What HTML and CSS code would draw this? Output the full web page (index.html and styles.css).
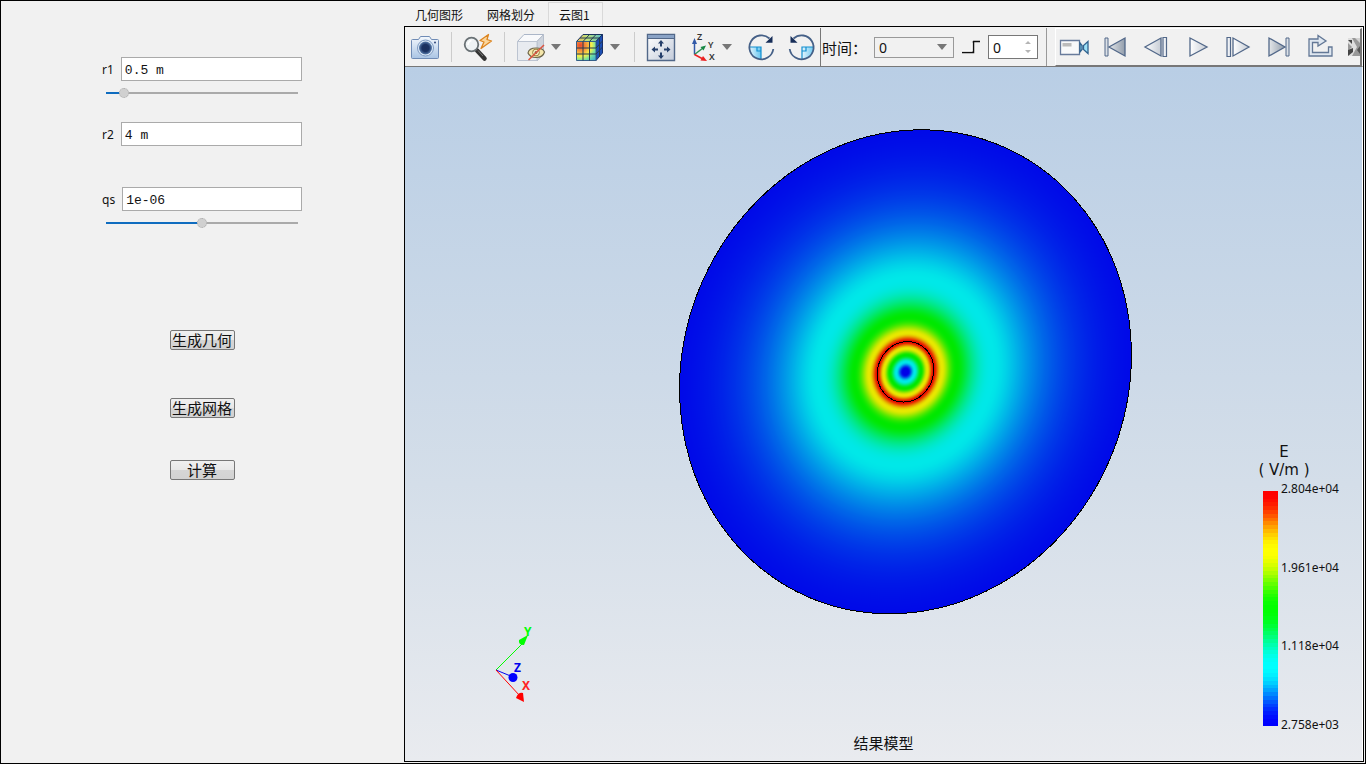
FILE: index.html
```html
<!DOCTYPE html>
<html lang="zh-CN">
<head>
<meta charset="utf-8">
<meta name="viewport" content="width=device-width, initial-scale=1">
<title>结果模型</title>
<link rel="stylesheet" href="styles.css">
</head>
<body>
<div class="app">
  <form class="params" onsubmit="return false">
    <div class="field">
      <div class="field-row">
        <label for="r1">r1</label>
        <input class="text-input" id="r1" type="text" value="0.5 m">
      </div>
      <input class="slider" type="range" aria-label="r1" min="0" max="100" value="7" style="--fill: 9%">
    </div>
    <div class="field field-r2">
      <div class="field-row">
        <label for="r2">r2</label>
        <input class="text-input" id="r2" type="text" value="4 m">
      </div>
    </div>
    <div class="field field-qs">
      <div class="field-row">
        <label for="qs">qs</label>
        <input class="text-input" id="qs" type="text" value="1e-06">
      </div>
      <input class="slider" type="range" aria-label="qs" min="0" max="100" value="50" style="--fill: 50%">
    </div>
    <div class="actions">
      <button class="action" type="button">生成几何</button>
      <button class="action action-mesh" type="button">生成网格</button>
      <button class="action action-solve" type="button">计算</button>
    </div>
  </form>

  <main class="results">
    <nav class="tabs" role="tablist">
      <button class="tab" type="button" role="tab">几何图形</button>
      <button class="tab" type="button" role="tab">网格划分</button>
      <button class="tab tab-active" type="button" role="tab" aria-selected="true">云图1</button>
    </nav>
    <section class="pane">
      <div class="toolbars">
        <div class="toolbar toolbar-view">
          <button class="tool" type="button" aria-label="截图">
            <svg viewBox="0 0 32 32" width="32" height="32">
              <defs>
                <linearGradient id="camBody" x1="0" y1="0" x2="0" y2="1"><stop offset="0" stop-color="#f4f8fd"/><stop offset="1" stop-color="#a9c4e4"/></linearGradient>
                <radialGradient id="camLens"><stop offset="0" stop-color="#1b2f5c"/><stop offset=".55" stop-color="#1b3262"/><stop offset="1" stop-color="#5b7fae"/></radialGradient>
              </defs>
              <path d="M3.500 8.500H9.500L11.500 5.500H20.500L22.500 8.500H28.500Q29.500 8.500 29.500 9.500V26.500Q29.500 27.500 28.500 27.500H3.500Q2.500 27.500 2.500 26.500V9.500Q2.500 8.500 3.500 8.500Z" fill="url(#camBody)" stroke="#6f8bb5"/>
              <circle cx="16.500" cy="17" r="8" fill="#dce8f5" stroke="#7d9ac2"/>
              <circle cx="16.500" cy="17" r="6.500" fill="url(#camLens)"/>
              <circle cx="26" cy="11.500" r="1" fill="#31487a"/>
            </svg>
          </button>
          <span class="sep"></span>
          <button class="tool" type="button" aria-label="快速缩放">
            <svg viewBox="0 0 32 32" width="32" height="32">
              <path d="M15 19.500L22.500 27.500" stroke="#333" stroke-width="4.500" stroke-linecap="round"/>
              <path d="M16 19.500L21 25" stroke="#777" stroke-width="1"/>
              <circle cx="9.500" cy="13.500" r="6.800" fill="#eef2f4" stroke="#697175" stroke-width="1.800"/>
              <path d="M6 14Q6 10.500 9.500 9.500" fill="none" stroke="#fff" stroke-width="1.500"/>
              <path d="M26.500 3.500L18 9.500L22 11L19 17.500L29.500 10L25 8.500Z" fill="#fbd69b" stroke="#dc8520" stroke-width="1.300" stroke-linejoin="round"/>
            </svg>
          </button>
          <span class="sep"></span>
          <div class="split">
            <button class="tool" type="button" aria-label="透明显示">
              <svg viewBox="0 0 32 32" width="32" height="32">
                <path d="M2.500 10.500L9 3.500H28.500L22 10.500Z" fill="#f8f9fb" stroke="#abb6c8"/>
                <path d="M22 10.500L28.500 3.500V23L22 30Z" fill="#ced4dd" stroke="#b5bdca"/>
                <path d="M2.500 10.500H22V29.500H2.500Z" fill="#e8ebf0" stroke="#bcc4d1"/>
                <path d="M13 22Q14 17 21 17Q28 17 29.500 21Q28 26.500 21 26.500Q15 26.500 13 22Z" fill="#f4e6aa" stroke="#6d6549" stroke-width="1.200"/>
                <circle cx="21" cy="21.500" r="3.400" fill="#f8edc1" stroke="#967c37"/>
                <circle cx="21" cy="21.500" r="1.300" fill="#51462d"/>
                <path d="M13.500 29L29 14" stroke="#dd5440" stroke-width="1.500"/>
              </svg>
            </button>
            <button class="drop" type="button" aria-label="透明选项"><svg viewBox="0 0 10 6" width="10" height="6"><path d="M0 0H10L5 6Z" fill="#777"/></svg></button>
          </div>
          <div class="split">
            <button class="tool" type="button" aria-label="云图样式">
              <svg viewBox="0 0 32 32" width="32" height="32">
                <defs>
                  <radialGradient id="cubeFront" cx=".2" cy=".2" r="1.150"><stop offset="0" stop-color="#e9462c"/><stop offset=".3" stop-color="#f8a23d"/><stop offset=".5" stop-color="#f2f24b"/><stop offset=".7" stop-color="#6fe0a2"/><stop offset="1" stop-color="#2b9be6"/></radialGradient>
                  <linearGradient id="cubeTop"><stop offset="0" stop-color="#e8b35b"/><stop offset=".4" stop-color="#bfe378"/><stop offset="1" stop-color="#56bbc7"/></linearGradient>
                </defs>
                <path d="M2.500 10.500L9 3.500H28.500L22 10.500Z" fill="url(#cubeTop)" stroke="#18335d"/>
                <path d="M22 10.500L28.500 3.500V22L22 29.500Z" fill="#1c4fb5" stroke="#172f69"/>
                <path d="M2.500 10.500H22V29.500H2.500Z" fill="url(#cubeFront)" stroke="#356089"/>
                <path d="M9 29.500V10.500L15.500 3.500M15.500 29.500V10.500L22 3.500M2.500 17H22L28.500 10M2.500 23H22L28.500 16M6 7H25.500V26" fill="none" stroke="#263b50"/>
              </svg>
            </button>
            <button class="drop" type="button" aria-label="云图选项"><svg viewBox="0 0 10 6" width="10" height="6"><path d="M0 0H10L5 6Z" fill="#777"/></svg></button>
          </div>
          <span class="sep"></span>
          <button class="tool" type="button" aria-label="适合窗口">
            <svg viewBox="0 0 32 32" width="32" height="32">
              <defs><linearGradient id="fitBg" x1="0" y1="0" x2="1" y2="1"><stop offset="0" stop-color="#fff"/><stop offset="1" stop-color="#c3cbda"/></linearGradient></defs>
              <path d="M2.500 3.500H29.500V29.500H2.500Z" fill="url(#fitBg)" stroke="#526889" stroke-width="1.400"/>
              <path d="M3 4H29V7H3Z" fill="#8aa3c6"/><path d="M3 7.500H29" stroke="#526889"/>
              <path d="M16 9L19 12.500H17V15.500H15V12.500H13ZM16 28L13 24.500H15V21.500H17V24.500H19ZM6.500 18.500L10 15.500V17.500H13V19.500H10V21.500ZM25.500 18.500L22 21.500V19.500H19V17.500H22V15.500Z" fill="#263f6b"/>
            </svg>
          </button>
          <div class="split">
            <button class="tool" type="button" aria-label="视图方向">
              <svg class="axis-icon" viewBox="0 0 32 32" width="32" height="32">
                <path d="M8.500 23.500V11" stroke="#3159a8" stroke-width="1.500"/><path d="M8.500 7L11 13H6Z" fill="#3159a8"/>
                <path d="M8.500 23.500L17 17" stroke="#2a9353" stroke-width="1.500"/><path d="M20 14.500L17.500 19.500L14.500 16Z" fill="#178743"/>
                <path d="M8.500 23.500L16 27.500" stroke="#ec2121" stroke-width="1.500"/><path d="M21 30L14.500 29.500L17 25Z" fill="#ec2121"/>
                <text x="11" y="9">Z</text><text x="22" y="17">Y</text><text x="23" y="29">X</text>
              </svg>
            </button>
            <button class="drop" type="button" aria-label="视图选项"><svg viewBox="0 0 10 6" width="10" height="6"><path d="M0 0H10L5 6Z" fill="#777"/></svg></button>
          </div>
          <button class="tool" type="button" aria-label="顺时针旋转">
            <svg viewBox="0 0 32 32" width="32" height="32">
              <defs><linearGradient id="turn"><stop offset="0" stop-color="#e6f6fd"/><stop offset="1" stop-color="#68c6f0"/></linearGradient></defs>
              <path d="M4 16H16V28.500Q4.500 27 4 16Z" fill="url(#turn)"/>
              <path d="M4 16H16V28M12 16V20H16" fill="none" stroke="#128fd0" stroke-width="1.200"/>
              <path d="M24.500 7.500A12 12 0 1 0 28.300 18" fill="none" stroke="#456087" stroke-width="1.800"/>
              <path d="M27.500 5V11.800H20.500Z" fill="#172e59"/>
            </svg>
          </button>
          <button class="tool" type="button" aria-label="逆时针旋转">
            <svg viewBox="0 0 32 32" width="32" height="32">
              <path d="M28 16H16V28.500Q27.500 27 28 16Z" fill="url(#turn)"/>
              <path d="M28 16H16V28M20 16V20H16" fill="none" stroke="#128fd0" stroke-width="1.200"/>
              <path d="M7.500 7.500A12 12 0 1 1 3.700 18" fill="none" stroke="#456087" stroke-width="1.800"/>
              <path d="M4.500 5V11.800H11.500Z" fill="#172e59"/>
            </svg>
          </button>
        </div>

        <div class="toolbar toolbar-time">
          <label class="time-label" for="time">时间：</label>
          <div class="combo">
            <select id="time"><option>0</option></select>
            <svg class="combo-arrow" viewBox="0 0 10 6" width="10" height="6"><path d="M0 0H10L5 6Z" fill="#777"/></svg>
          </div>
          <label class="step-label" for="step" aria-label="步">
            <svg viewBox="0 0 20 16" width="20" height="16"><path d="M1 13.500H12.500V2" fill="none" stroke="#111" stroke-width="1.500"/><path d="M12 2.500H19" stroke="#111" stroke-width="1.500"/><path d="M1 12H11V4" fill="none" stroke="#fff"/></svg>
          </label>
          <div class="spin">
            <input id="step" type="number" value="0">
            <svg class="spin-arrows" viewBox="0 0 6 14" width="6" height="14"><path d="M0 4H6L3 1ZM0 10H6L3 13Z" fill="#b4b4b4"/></svg>
          </div>
        </div>

        <div class="toolbar toolbar-play">
          <button class="tool" type="button" aria-label="录制">
            <svg viewBox="0 0 32 32" width="32" height="32">
              <defs><linearGradient id="playGrad"><stop offset="0" stop-color="#fff"/><stop offset="1" stop-color="#c6ccd5"/></linearGradient>
              <linearGradient id="endGrad"><stop offset="0" stop-color="#e4e7ea"/><stop offset="1" stop-color="#929dab"/></linearGradient></defs>
              <path d="M2.500 9.500H21.500V23.500H2.500Z" fill="#f8f9fa" stroke="#687b9b" stroke-width="1.300"/>
              <path d="M4.500 12H13.500V15.500H4.500Z" fill="#bbb"/>
              <path d="M22 12L24 14.500V18.500L22 21ZM30 10.500L25.500 14.500V18.500L30 22.500Z" fill="#9ce0f6" stroke="#32638f" stroke-width="1.300"/>
            </svg>
          </button>
          <button class="tool" type="button" aria-label="第一帧">
            <svg viewBox="0 0 32 32" width="32" height="32"><path d="M6 7H9V25H6Z" fill="#dce1e7" stroke="#526889"/><path d="M26 7V25L10 16Z" fill="url(#endGrad)" stroke="#526889" stroke-width="1.300"/></svg>
          </button>
          <button class="tool" type="button" aria-label="上一帧">
            <svg viewBox="0 0 32 32" width="32" height="32"><path d="M21 7V25L5 16Z" fill="url(#playGrad)" stroke="#526889" stroke-width="1.300"/><path d="M23 6.500H26.500V25.500H23Z" fill="#eef1f5" stroke="#526889" stroke-width="1.200"/></svg>
          </button>
          <button class="tool" type="button" aria-label="播放">
            <svg viewBox="0 0 32 32" width="32" height="32"><path d="M9 7V25L26 16Z" fill="url(#playGrad)" stroke="#526889" stroke-width="1.300"/></svg>
          </button>
          <button class="tool" type="button" aria-label="下一帧">
            <svg viewBox="0 0 32 32" width="32" height="32"><path d="M5 6.500H8.500V25.500H5Z" fill="#eef1f5" stroke="#526889" stroke-width="1.200"/><path d="M11 7V25L27 16Z" fill="url(#playGrad)" stroke="#526889" stroke-width="1.300"/></svg>
          </button>
          <button class="tool" type="button" aria-label="最后一帧">
            <svg viewBox="0 0 32 32" width="32" height="32"><path d="M6 7V25L22 16Z" fill="url(#endGrad)" stroke="#526889" stroke-width="1.300"/><path d="M23 7H26V25H23Z" fill="#dce1e7" stroke="#526889"/></svg>
          </button>
          <button class="tool" type="button" aria-label="循环播放">
            <svg viewBox="0 0 32 32" width="32" height="32"><path d="M5 25V8H14V4.500L22 10L14 15V11.500H8.500V21.500H24.500V16H28V25Z" fill="#dfe7f0" stroke="#637896" stroke-width="1.300"/></svg>
          </button>
          <button class="more" type="button" aria-label="更多">
            <svg viewBox="0 0 12 18" width="12" height="18"><path d="M0 0H12V18H0Z" fill="#999"/><path d="M0 0H4L9 9L4 18H0V13L4 9L0 5Z" fill="#dedede"/><path d="M0 2L4 6V2ZM0 12L5 10V14L0 18Z" fill="#444"/><path d="M7 0H12V5Z" fill="#d2d2d2"/><path d="M9 12L12 8V16Z" fill="#555"/></svg>
          </button>
        </div>
      </div>

      <div class="stage">
        <svg class="plot" viewBox="0 0 957 694" preserveAspectRatio="xMidYMid meet" role="img" aria-label="电场云图">
          <defs><radialGradient id="field" gradientUnits="userSpaceOnUse" cx="0" cy="0" r="1000"></radialGradient></defs>
          <g transform="matrix(.2254 0 -.016 .242 500.500 304.800)" stroke="#000" shape-rendering="crispEdges">
            <circle r="1000" fill="url(#field)" vector-effect="non-scaling-stroke"/>
            <circle r="125" fill="none" vector-effect="non-scaling-stroke"/>
          </g>
        </svg>
        <svg class="triad" viewBox="0 0 50 84" width="50" height="84">
          <path d="M7 47L34 20" stroke="#0f0"/><path d="M39 12L30 17Q29 22 35 22Z" fill="#0f0"/>
          <path d="M7 47L24 54" stroke="#00e"/><circle cx="24" cy="54.500" r="4.500" fill="#00f"/>
          <path d="M7 47L31 73" stroke="#f00"/><path d="M35 79L34 70Q29 69 27 75Z" fill="#f00"/>
          <text x="35" y="13" fill="#0f0">Y</text><text x="25" y="49" fill="#00e">Z</text><text x="33" y="67" fill="#f22">X</text>
        </svg>
        <div class="caption">结果模型</div>
        <div class="legend">
          <div class="legend-title"><span>E</span><span>( V/m )</span></div>
          <div class="legend-body">
            <div class="bar" id="bar"></div>
            <div class="ticks"><span>2.804e+04</span><span>1.961e+04</span><span>1.118e+04</span><span>2.758e+03</span></div>
          </div>
        </div>
      </div>
    </section>
  </main>
</div>
<script src="field.js"></script>
</body>
</html>
```

FILE: styles.css
```css
* {
  box-sizing: border-box;
}

body {
  margin: 0;
  background: #f1f1f1;
  color: #111;
  font-family: "Noto Sans", "Noto Sans CJK SC", sans-serif;
  font-size: 12px;
}

button,
input,
select {
  margin: 0;
  padding: 0;
  font: inherit;
  color: inherit;
}

svg {
  display: block;
}

.app {
  display: flex;
  min-height: 100vh;
  border: 1px solid #000;
}

/* Parameter panel */

.params {
  flex: none;
  width: 403px;
  padding: 56px 102px 0 101px;
}

.field-row {
  display: flex;
  align-items: center;
  gap: 7px;
}

.text-input {
  flex: 1;
  min-width: 0;
  height: 24px;
  padding: 2px 3px 0;
  border: 1px solid #aaa;
  background: #fff;
  font-family: "Liberation Mono", monospace;
  font-size: 13px;
}

.slider {
  display: block;
  width: 192px;
  height: 14px;
  margin: 5px 4px 0;
  appearance: none;
  background: linear-gradient(to right, #0f6cbf var(--fill), #aaa var(--fill)) center / 100% 2px no-repeat;
}

.slider::-webkit-slider-thumb {
  appearance: none;
  width: 10px;
  height: 10px;
  border: 1px dotted #aaa;
  border-radius: 50%;
  background: #d0d0d0;
}

.field-r2 {
  margin-top: 22px;
}

.field-qs {
  margin-top: 41px;
}

.actions {
  display: flex;
  flex-direction: column;
  align-items: center;
  margin-top: 100px;
}

.action {
  width: 65px;
  height: 20px;
  border: 1px solid #777;
  border-radius: 2px;
  background: linear-gradient(#f0f0f0, #e8e8e8 48%, #d6d6d6 50%, #d2d2d2);
  font-family: "Noto Sans CJK SC", sans-serif;
  font-size: 15px;
  line-height: 18px;
  white-space: nowrap;
}

.action-mesh {
  margin-top: 48px;
}

.action-solve {
  margin-top: 42px;
}

/* Result area */

.results {
  display: flex;
  flex: 1;
  flex-direction: column;
  min-width: 0;
  padding: 0 1px 1px 0;
}

.tabs {
  display: flex;
  height: 25px;
  padding-top: 1px;
}

.tab {
  padding: 0 12px 0 10px;
  border: 1px solid transparent;
  border-bottom: 0;
  background: none;
  font-family: "Noto Sans CJK SC", sans-serif;
  line-height: 22px;
}

.tab-active {
  border-color: #d9d9d9;
  background: #f3f3f3;
}

.pane {
  display: flex;
  flex: 1;
  flex-direction: column;
  border: 1px solid #000;
}

.toolbars {
  display: flex;
  height: 40px;
  padding: 1px 0 0;
  border-bottom: 1px solid #777;
  border-right: 1px solid #fff;
}

.toolbar {
  display: flex;
  align-items: center;
}

.toolbar-view {
  gap: 9px;
  padding: 0 2px 0 4px;
  border-right: 1px solid #777;
}

.tool,
.drop,
.more {
  display: flex;
  align-items: center;
  justify-content: center;
  flex: none;
  border: 0;
  background: none;
}

.tool {
  width: 32px;
  height: 32px;
}

.drop {
  width: 18px;
  height: 32px;
}

.split {
  display: flex;
}

.sep {
  width: 1px;
  height: 30px;
  margin: 0 1px;
  background: #ccc;
}

.axis-icon {
  font-size: 9px;
  font-weight: 600;
  fill: #333;
}

.toolbar-time {
  width: 226px;
  padding-right: 8px;
  border-right: 1px solid #999;
  font-size: 14px;
}

.time-label {
  flex: 1;
  padding-left: 1px;
  font-family: "Noto Sans CJK SC", sans-serif;
  font-size: 15px;
  white-space: nowrap;
}

.combo,
.spin {
  display: grid;
  align-items: center;
}

.combo > *,
.spin > * {
  grid-area: 1 / 1;
}

.combo select {
  width: 80px;
  height: 21px;
  padding-left: 4px;
  appearance: none;
  border: 1px solid #999;
  border-radius: 0;
  background: #f1f1f1;
}

.combo-arrow {
  justify-self: end;
  margin-right: 7px;
  pointer-events: none;
}

.step-label {
  margin: 0 7px;
}

.spin input {
  width: 50px;
  height: 24px;
  padding-left: 4px;
  appearance: textfield;
  border: 1px solid #777;
  background: #fff;
}

.spin input::-webkit-inner-spin-button {
  appearance: none;
}

.spin-arrows {
  justify-self: end;
  margin-right: 7px;
  pointer-events: none;
}

.toolbar-play {
  flex: 1;
  gap: 9px;
  min-width: 0;
  margin: 0 0 0 8px;
  padding-left: 2px;
  overflow: hidden;
  border: 1px solid #fff;
  border-right: 2px solid #777;
  border-bottom-color: #777;
}

.more {
  width: 12px;
  margin-left: auto;
}

/* Contour plot */

.stage {
  position: relative;
  display: flex;
  flex: 1;
  border-right: 1px solid #fff;
  background: linear-gradient(#b9cee5, #d4dee9 60%, #e9ebef);
}

.plot {
  flex: 1;
  min-width: 0;
}

.triad {
  position: absolute;
  bottom: 54px;
  left: 84px;
  font-size: 12px;
  font-weight: 700;
}

.caption {
  position: absolute;
  right: 0;
  bottom: 7px;
  left: 0;
  font-family: "Noto Sans CJK SC", sans-serif;
  font-size: 15px;
  line-height: 22px;
  text-align: center;
}

.legend {
  position: absolute;
  right: 23px;
  bottom: 28px;
}

.legend-title {
  display: flex;
  flex-direction: column;
  align-items: center;
  width: 42px;
  font-family: "DejaVu Sans", sans-serif;
  font-size: 15px;
  line-height: 18px;
  white-space: nowrap;
}

.legend-body {
  display: flex;
  gap: 3px;
  height: 252px;
  margin-top: 2px;
}

.bar {
  display: flex;
  flex-direction: column;
  width: 15px;
  margin: 10px 0 7px;
}

.bar > i {
  flex: 1;
}

.ticks {
  display: flex;
  flex-direction: column;
  justify-content: space-between;
  line-height: 16px;
}
```

FILE: field.js
```js
const E_MIN = 2758;
const E_MAX = 28040;
const INNER = 0.125;
const SCALE = [[0, 0, 1], [0, 1, 1], [0, 1, 0], [1, 1, 0], [1, 0, 0]];

// Colour of a normalised value, eased between the five key colours.
function colour(t, peak) {
  const s = Math.min(Math.max(t, 0), 1) * 4;
  const i = Math.min(Math.floor(s), 3);
  const f = s - i;
  const k = f * f * (3 - 2 * f);
  const rgb = SCALE[i].map((c, n) => Math.round((c + (SCALE[i + 1][n] - c) * k) * peak));
  return `rgb(${rgb.join(",")})`;
}

// Linear inside the charged cylinder, inverse of the radius outside it.
function strength(r) {
  return r < INNER ? E_MAX * r / INNER : E_MAX * INNER / r;
}

const gradient = document.getElementById("field");
for (let n = 0; n <= 250; n++) {
  const r = n / 250;
  const stop = document.createElementNS("http://www.w3.org/2000/svg", "stop");
  stop.setAttribute("offset", r);
  stop.setAttribute("stop-color", colour((strength(r) - E_MIN) / (E_MAX - E_MIN), 232));
  gradient.append(stop);
}

const bar = document.getElementById("bar");
const BANDS = 62;
for (let n = 0; n < BANDS; n++) {
  const band = document.createElement("i");
  band.style.background = colour(1 - n / (BANDS - 1), 255);
  bar.append(band);
}
```
